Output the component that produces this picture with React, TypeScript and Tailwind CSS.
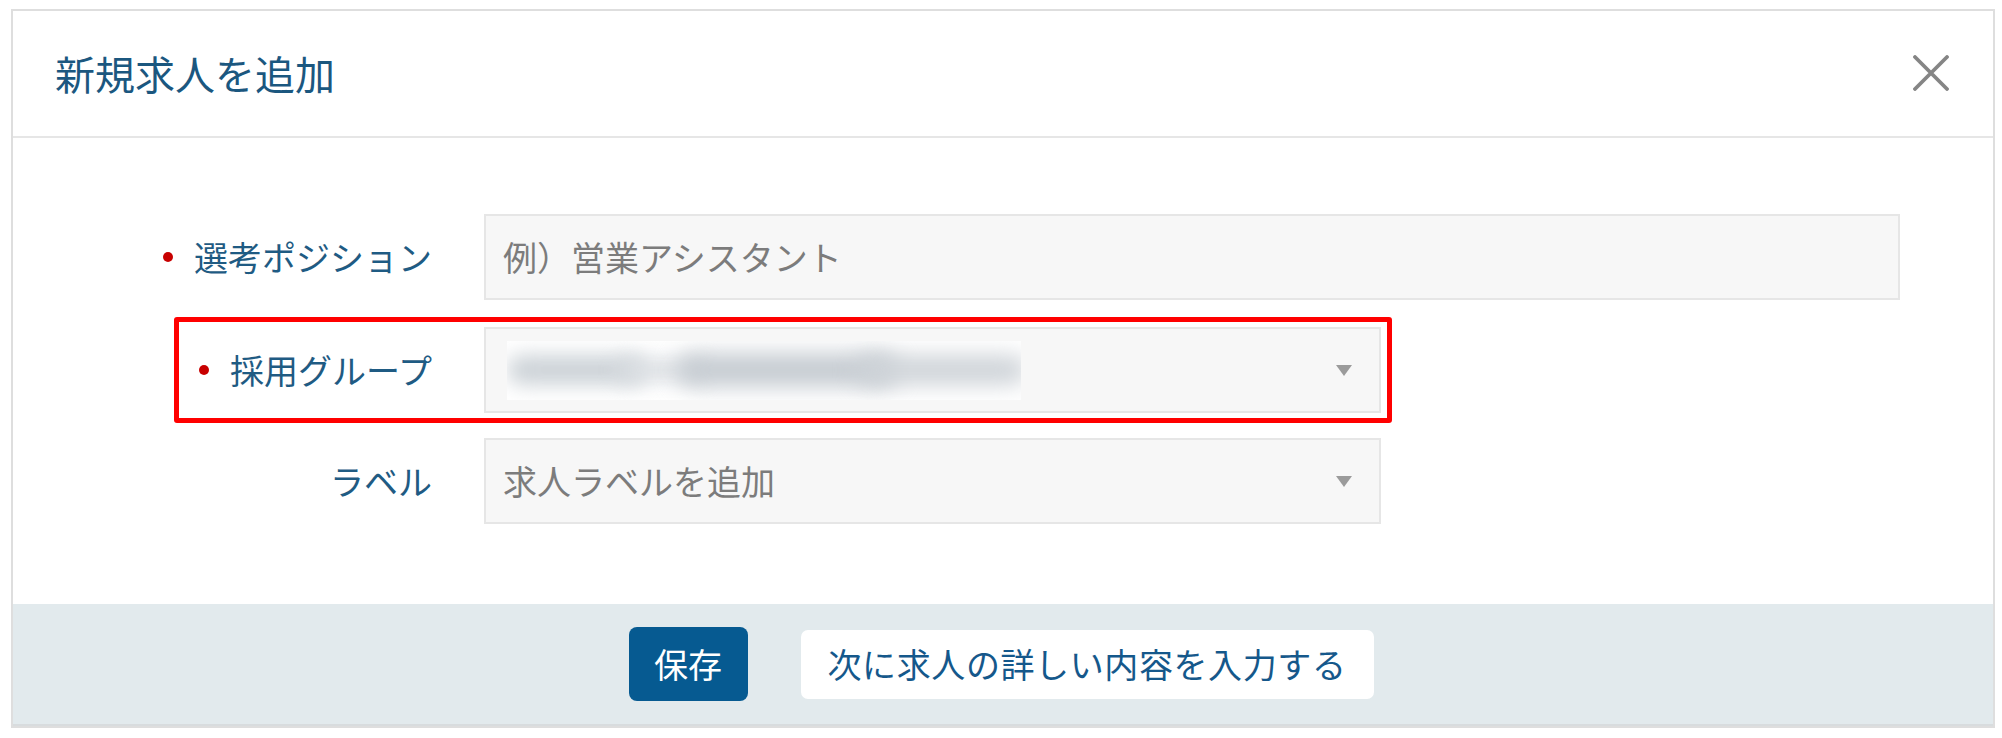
import React from "react";

const FONT = '"Noto Sans CJK JP", "Noto Sans", sans-serif';

function Caret() {
  return (
    <svg width="16" height="11" viewBox="0 0 16 11" className="shrink-0">
      <path d="M0 0 H16 L8 11 Z" fill="#9b9b9b" />
    </svg>
  );
}

function Dot() {
  return <span className="inline-block w-[10px] h-[10px] rounded-full bg-[#c80000] mr-[21px] shrink-0" />;
}

export default function App() {
  return (
    <div className="w-[2002px] h-[738px] bg-white pt-[9px] pl-[11px]" style={{ fontFamily: FONT }}>
      <div className="w-[1984px] border-2 border-[#dedede] bg-white flex flex-col">
        {/* Header */}
        <div className="h-[127px] border-b-2 border-[#e6e6e6] flex items-center justify-between pl-[42px] pr-[44px] pb-[2px]">
          <h1 className="text-[40px] leading-none text-[#1b577f] font-normal">新規求人を追加</h1>
          <svg width="36" height="36" viewBox="0 0 36 36">
            <path d="M2 2 L34 34 M34 2 L2 34" stroke="#858585" strokeWidth="3.8" strokeLinecap="round" />
          </svg>
        </div>

        {/* Body */}
        <div className="pt-[76px] pb-[80px] flex flex-col">
          {/* Row 1 */}
          <div className="flex items-center">
            <div className="w-[419px] shrink-0 flex items-center justify-end">
              <Dot />
              <span className="text-[34px] leading-none text-[#1f5b83]">選考ポジション</span>
            </div>
            <div className="ml-[52px] w-[1416px] h-[86px] bg-[#f7f7f7] border-2 border-[#e6e6e6] flex items-center pl-[17px]">
              <span className="text-[34px] leading-none text-[#7c7c7c]">例）営業アシスタント</span>
            </div>
          </div>

          {/* Row 2 */}
          <div className="relative flex items-center mt-[27px]">
            <div className="w-[419px] shrink-0 flex items-center justify-end">
              <Dot />
              <span className="text-[34px] leading-none text-[#1f5b83]">採用グループ</span>
            </div>
            <div className="ml-[52px] w-[897px] h-[86px] bg-[#f7f7f7] border-2 border-[#e6e6e6] flex items-center justify-between pl-[21px] pr-[27px]">
              <div className="relative w-[514px] h-[59px] bg-white overflow-hidden">
                <div className="absolute left-[0px] top-[14px] w-[140px] h-[30px] rounded-full bg-[#ccd2d7] blur-[10px]" />
                <div className="absolute left-[110px] top-[18px] w-[90px] h-[22px] rounded-full bg-[#dadee2] blur-[10px]" />
                <div className="absolute left-[170px] top-[12px] w-[220px] h-[34px] rounded-full bg-[#c5cbd1] blur-[11px]" />
                <div className="absolute left-[350px] top-[14px] w-[170px] h-[30px] rounded-full bg-[#ced3d8] blur-[11px]" />
              </div>
              <Caret />
            </div>
            <div className="absolute left-[161px] top-[-10px] w-[1218px] h-[106px] border-[5px] border-[#ff0000] rounded-[3px] pointer-events-none" />
          </div>

          {/* Row 3 */}
          <div className="flex items-center mt-[25px]">
            <div className="w-[419px] shrink-0 flex items-center justify-end">
              <span className="text-[34px] leading-none text-[#1f5b83]">ラベル</span>
            </div>
            <div className="ml-[52px] w-[897px] h-[86px] bg-[#f7f7f7] border-2 border-[#e6e6e6] flex items-center justify-between pl-[17px] pr-[27px]">
              <span className="text-[34px] leading-none text-[#7c7c7c]">求人ラベルを追加</span>
              <Caret />
            </div>
          </div>
        </div>

        {/* Footer */}
        <div className="h-[122px] bg-[#e2eaed] border-b-2 border-[#d8dcde] flex items-center justify-center gap-[53px] pr-[4px]">
          <button className="w-[119px] h-[74px] rounded-[8px] bg-[#065a91] text-white text-[34px] leading-none flex items-center justify-center">
            保存
          </button>
          <button className="w-[573px] h-[69px] rounded-[7px] bg-white text-[#15588b] text-[34px] leading-none tracking-[0.6px] flex items-center justify-center">
            次に求人の詳しい内容を入力する
          </button>
        </div>
      </div>
    </div>
  );
}
